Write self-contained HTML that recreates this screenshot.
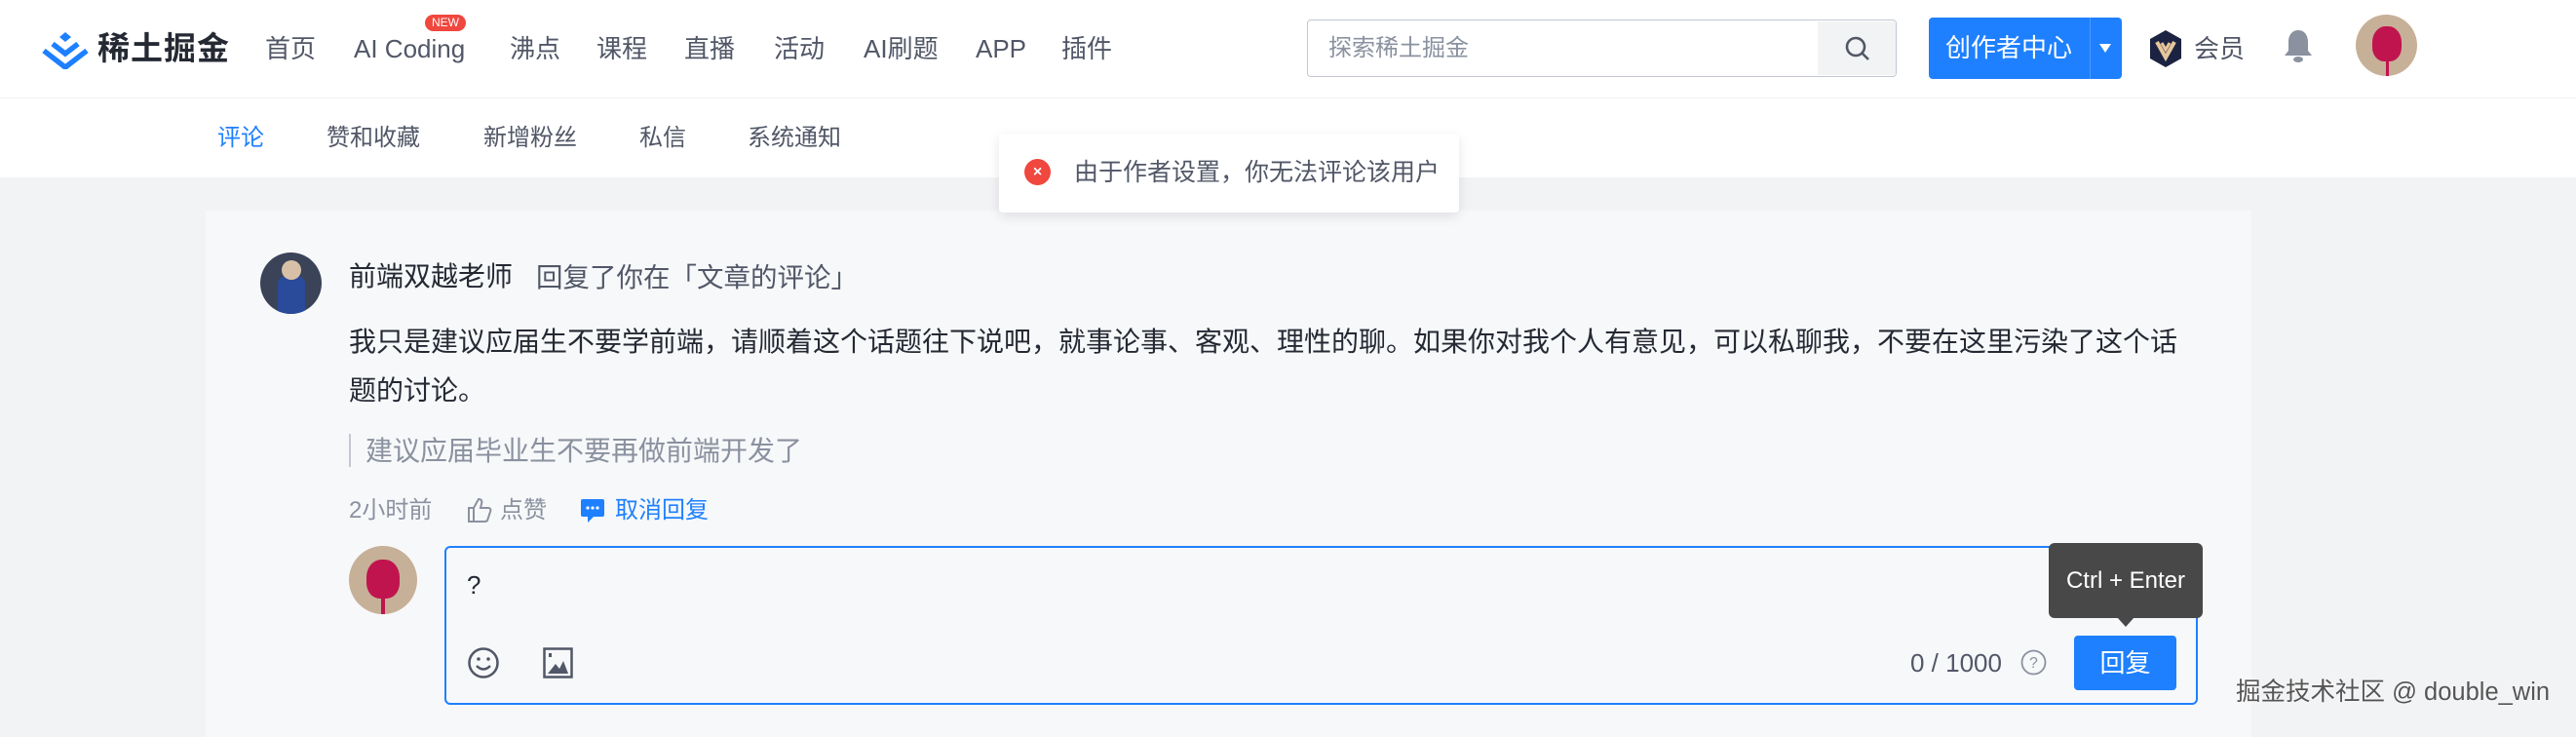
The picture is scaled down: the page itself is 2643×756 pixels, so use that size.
<!DOCTYPE html>
<html><head><meta charset="utf-8"><style>
*{margin:0;padding:0;box-sizing:border-box}
body{width:2643px;height:747px;overflow:hidden;background:#f2f3f5;font-family:"Liberation Sans","Noto Sans CJK SC",sans-serif;color:#252933;position:relative}
.a{position:absolute;white-space:nowrap;line-height:1}
</style></head><body>
<div class="a" style="left:0;top:0;width:2643px;height:101px;background:#fff;border-bottom:1px solid #eef0f3"></div>
<svg class="a" style="left:42px;top:31px" width="50" height="40" viewBox="0 0 50 40"><polygon points="25,2 31,7 25,12 19,7" fill="#1e80ff"/><polyline points="12,14 25,24 38,14" fill="none" stroke="#1e80ff" stroke-width="5.5"/><polyline points="3,21 25,38 47,21" fill="none" stroke="#1e80ff" stroke-width="5.5"/></svg>
<div class="a" style="left:100px;top:33px;font-size:33px;font-weight:bold;color:#252933;letter-spacing:1px">稀土掘金</div>
<div class="a" style="left:272px;top:37px;font-size:26px;color:#515767">首页</div>
<div class="a" style="left:363px;top:37px;font-size:26px;color:#515767">AI Coding</div>
<div class="a" style="left:436px;top:15px;width:42px;height:17px;border-radius:9px;background:#f0473e;color:#fff;font-size:12px;line-height:17px;text-align:center">NEW</div>
<div class="a" style="left:523px;top:37px;font-size:26px;color:#515767">沸点</div>
<div class="a" style="left:612px;top:37px;font-size:26px;color:#515767">课程</div>
<div class="a" style="left:702px;top:37px;font-size:26px;color:#515767">直播</div>
<div class="a" style="left:794px;top:37px;font-size:26px;color:#515767">活动</div>
<div class="a" style="left:886px;top:37px;font-size:26px;color:#515767">AI刷题</div>
<div class="a" style="left:1001px;top:37px;font-size:26px;color:#515767">APP</div>
<div class="a" style="left:1089px;top:37px;font-size:26px;color:#515767">插件</div>
<div class="a" style="left:1341px;top:20px;width:605px;height:59px;border:1px solid #c2c8d1;border-radius:4px;background:#fff"></div>
<div class="a" style="left:1865px;top:22px;width:80px;height:55px;background:#f2f3f5"></div>
<div class="a" style="left:1363px;top:38px;font-size:24px;color:#8a919f">探索稀土掘金</div>
<svg class="a" style="left:1892px;top:36px" width="28" height="28" viewBox="0 0 28 28"><circle cx="12" cy="12" r="9" fill="none" stroke="#515767" stroke-width="2.6"/><line x1="18.5" y1="18.5" x2="25" y2="25" stroke="#515767" stroke-width="2.6"/></svg>
<div class="a" style="left:1979px;top:18px;width:198px;height:63px;background:#1e80ff;border-radius:4px"></div>
<div class="a" style="left:2144px;top:18px;width:1px;height:63px;background:#4b9aff"></div>
<div class="a" style="left:1996px;top:36px;font-size:26px;color:#fff">创作者中心</div>
<div class="a" style="left:2154px;top:45px;width:0;height:0;border-left:6px solid transparent;border-right:6px solid transparent;border-top:9px solid #fff"></div>
<svg class="a" style="left:2204px;top:30px" width="36" height="40" viewBox="0 0 36 40"><polygon points="18,1 34,10 34,30 18,39 2,30 2,10" fill="#1c2342"/><polyline points="9,13 18,29 27,13" fill="none" stroke="#e6c79a" stroke-width="4"/><polyline points="14,14 18,21 22,14" fill="none" stroke="#e6c79a" stroke-width="3"/></svg>
<div class="a" style="left:2251px;top:37px;font-size:26px;color:#515767">会员</div>
<svg class="a" style="left:2341px;top:28px" width="34" height="38" viewBox="0 0 34 38"><path d="M17 3c-7 0-10 6-10 12v9l-4 5h28l-4-5v-9c0-6-3-12-10-12z" fill="#8a919f"/><ellipse cx="17" cy="33" rx="5" ry="3" fill="#8a919f"/></svg>
<div class="a" style="left:2417px;top:15px;width:63px;height:63px;border-radius:50%;background:#c7b098;overflow:hidden"><div style="position:absolute;left:17px;top:12px;width:30px;height:36px;border-radius:45% 45% 40% 40%;background:#c0144f"></div><div style="position:absolute;left:31px;top:44px;width:3px;height:19px;background:#c0144f"></div></div>
<div class="a" style="left:0;top:101px;width:2643px;height:81px;background:#fff"></div>
<div class="a" style="left:223px;top:130px;font-size:24px;color:#1e80ff">评论</div>
<div class="a" style="left:335px;top:130px;font-size:24px;color:#515767">赞和收藏</div>
<div class="a" style="left:496px;top:130px;font-size:24px;color:#515767">新增粉丝</div>
<div class="a" style="left:656px;top:130px;font-size:24px;color:#515767">私信</div>
<div class="a" style="left:767px;top:130px;font-size:24px;color:#515767">系统通知</div>
<div class="a" style="left:211px;top:216px;width:2099px;height:540px;background:#f7f8fa"></div>
<div class="a" style="left:1025px;top:137px;width:472px;height:81px;background:#fff;border-radius:4px;box-shadow:0 4px 12px rgba(0,0,0,.1)"></div>
<div class="a" style="left:1051px;top:163px;width:27px;height:27px;border-radius:50%;background:#f0473e;color:#fff;font-size:16px;font-weight:bold;line-height:27px;text-align:center">×</div>
<div class="a" style="left:1102px;top:165px;font-size:25px;color:#515767">由于作者设置，你无法评论该用户</div>
<div class="a" style="left:267px;top:259px;width:63px;height:63px;border-radius:50%;background:#3a4358;overflow:hidden"><div style="position:absolute;left:18px;top:24px;width:28px;height:40px;background:#2a4a9a;border-radius:8px 8px 0 0"></div><div style="position:absolute;left:22px;top:8px;width:20px;height:20px;border-radius:50%;background:#d8c0a8"></div></div>
<div class="a" style="left:358px;top:270px;font-size:28px;color:#252933">前端双越老师</div>
<div class="a" style="left:550px;top:271px;font-size:27.5px;color:#515767">回复了你在「文章的评论」</div>
<div class="a" style="left:358px;top:326px;font-size:28px;color:#252933;line-height:50px">我只是建议应届生不要学前端，请顺着这个话题往下说吧，就事论事、客观、理性的聊。如果你对我个人有意见，可以私聊我，不要在这里污染了这个话<br>题的讨论。</div>
<div class="a" style="left:358px;top:445px;width:2px;height:34px;background:#c2c8d1"></div>
<div class="a" style="left:375px;top:449px;font-size:28px;color:#8a919f">建议应届毕业生不要再做前端开发了</div>
<div class="a" style="left:358px;top:512px;font-size:24px;color:#8a919f">2小时前</div>
<svg class="a" style="left:479px;top:509px" width="26" height="28" viewBox="0 0 26 28"><path d="M2 12h5v14H2zM7 12l5-9c3 0 4 2 3 5l-1 4h8c2 0 3 2 2 4l-3 9c-1 1-2 1-3 1H7" fill="none" stroke="#8a919f" stroke-width="2"/></svg>
<div class="a" style="left:513px;top:512px;font-size:24px;color:#8a919f">点赞</div>
<svg class="a" style="left:595px;top:510px" width="26" height="28" viewBox="0 0 26 28"><path d="M3 2h20a2 2 0 0 1 2 2v14a2 2 0 0 1-2 2H14l-6 6v-6H3a2 2 0 0 1-2-2V4a2 2 0 0 1 2-2z" fill="#1e80ff"/><circle cx="8" cy="11" r="1.6" fill="#fff"/><circle cx="13" cy="11" r="1.6" fill="#fff"/><circle cx="18" cy="11" r="1.6" fill="#fff"/></svg>
<div class="a" style="left:631px;top:512px;font-size:24px;color:#1e80ff">取消回复</div>
<div class="a" style="left:358px;top:560px;width:70px;height:70px;border-radius:50%;background:#c7b098;overflow:hidden"><div style="position:absolute;left:18px;top:14px;width:34px;height:40px;border-radius:45% 45% 40% 40%;background:#c0144f"></div><div style="position:absolute;left:33px;top:50px;width:4px;height:20px;background:#c0144f"></div></div>
<div class="a" style="left:456px;top:560px;width:1799px;height:163px;border:2px solid #1e80ff;border-radius:6px;background:#f7f8fa"></div>
<div class="a" style="left:479px;top:587px;font-size:26px;color:#252933">?</div>
<svg class="a" style="left:479px;top:663px" width="34" height="34" viewBox="0 0 34 34"><circle cx="17" cy="17" r="14.5" fill="none" stroke="#515767" stroke-width="2.5"/><circle cx="12" cy="13" r="1.8" fill="#515767"/><circle cx="22" cy="13" r="1.8" fill="#515767"/><path d="M10 20q7 7 14 0" fill="none" stroke="#515767" stroke-width="2.5"/></svg>
<svg class="a" style="left:557px;top:664px" width="31" height="32" viewBox="0 0 31 32"><rect x="1.5" y="1.5" width="28" height="29" fill="none" stroke="#515767" stroke-width="2.5"/><path d="M5 27l8-10 4 5 4-8 5 13z" fill="#515767"/><rect x="6" y="6" width="3" height="4" fill="#515767"/></svg>
<div class="a" style="left:1960px;top:667px;font-size:26px;color:#515767">0 / 1000</div>
<svg class="a" style="left:2073px;top:666px" width="27" height="27" viewBox="0 0 27 27"><circle cx="13.5" cy="13.5" r="12" fill="none" stroke="#8a919f" stroke-width="1.8"/><text x="13.5" y="19" text-anchor="middle" font-size="16" fill="#8a919f" font-family="Liberation Sans">?</text></svg>
<div class="a" style="left:2128px;top:652px;width:105px;height:56px;background:#1e80ff;border-radius:4px;color:#fff;font-size:26px;line-height:56px;text-align:center">回复</div>
<div class="a" style="left:2102px;top:557px;width:158px;height:77px;background:#484848;border-radius:6px;color:#fff;font-size:24px;line-height:77px;text-align:center">Ctrl + Enter</div>
<div class="a" style="left:2172px;top:633px;width:0;height:0;border-left:9px solid transparent;border-right:9px solid transparent;border-top:10px solid #484848"></div>
<div class="a" style="left:2294px;top:698px;font-size:25.5px;color:#555;text-shadow:0 0 2px #fff">掘金技术社区 @ double_win</div>
</body></html>
